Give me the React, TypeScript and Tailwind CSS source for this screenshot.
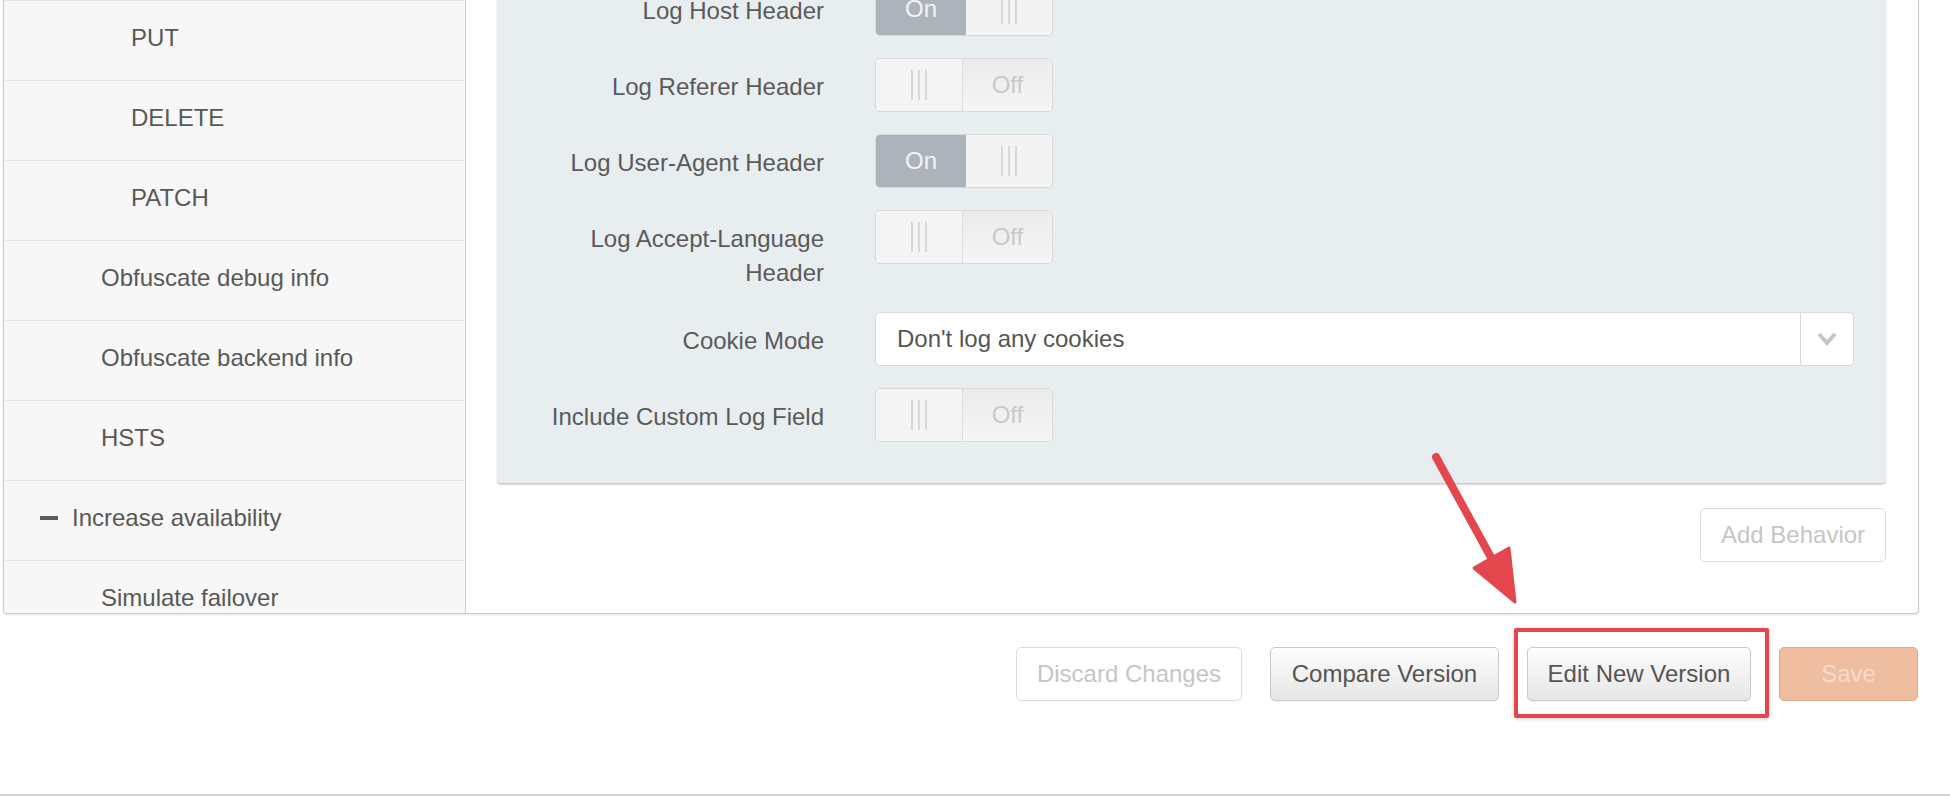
import React from "react";

const FONT = { fontFamily: '"Liberation Sans", Arial, Helvetica, sans-serif' };

function Grip() {
  return (
    <div className="flex gap-[5px]">
      <div className="w-[2px] h-[30px] bg-[#d8d8d8]" />
      <div className="w-[2px] h-[30px] bg-[#d8d8d8]" />
      <div className="w-[2px] h-[30px] bg-[#d8d8d8]" />
    </div>
  );
}

function Toggle({ on }: { on: boolean }) {
  return (
    <div className="flex w-[178px] h-[54px] rounded-[5px] border border-[#d9d9d9] overflow-hidden">
      {on ? (
        <>
          <div className="w-[90px] bg-[#adb3bb] text-[#f4f4f4] flex items-center justify-center">On</div>
          <div className="flex-1 bg-[#f3f3f3] flex items-center justify-center">
            <Grip />
          </div>
        </>
      ) : (
        <>
          <div className="w-[87px] bg-[#f4f4f4] flex items-center justify-center border-r border-[#dcdcdc]">
            <Grip />
          </div>
          <div className="flex-1 bg-linear-to-b from-[#ebebeb] to-[#f5f5f5] text-[#c9c9c9] flex items-center justify-center">
            Off
          </div>
        </>
      )}
    </div>
  );
}

function Row({ label, children }: { label: React.ReactNode; children: React.ReactNode }) {
  return (
    <div className="flex items-start">
      <div className="w-[300px] text-right pt-[12px] leading-[34px] text-[#5a5a5a]">{label}</div>
      <div className="ml-[51px] flex-1">{children}</div>
    </div>
  );
}

function SideItem({ children, indent }: { children: React.ReactNode; indent: string }) {
  return (
    <div className={`h-[80px] shrink-0 border-t border-[#e8e8e8] flex items-center pb-[5px] ${indent} text-[#585858]`}>
      {children}
    </div>
  );
}

export default function App() {
  return (
    <div
      className="relative w-[1950px] h-[796px] bg-white border-b-[2px] border-[#d2d2d2] overflow-hidden text-[24px]"
      style={FONT}
    >
      <div className="ml-[3px] w-[1916px] h-[614px] flex border-x border-b border-[#cccccc] rounded-b-[4px] overflow-hidden shadow-[0_1px_2px_rgba(0,0,0,0.12)]">
        {/* Sidebar */}
        <div className="w-[462px] shrink-0 bg-[#f7f7f7] border-r border-[#cfcfcf] flex flex-col">
          <SideItem indent="pl-[127px]">PUT</SideItem>
          <SideItem indent="pl-[127px]">DELETE</SideItem>
          <SideItem indent="pl-[127px]">PATCH</SideItem>
          <SideItem indent="pl-[97px]">Obfuscate debug info</SideItem>
          <SideItem indent="pl-[97px]">Obfuscate backend info</SideItem>
          <SideItem indent="pl-[97px]">HSTS</SideItem>
          <SideItem indent="pl-[36px]">
            <span className="w-[18px] h-[4px] bg-[#5a5a5a] mr-[14px]" />
            Increase availability
          </SideItem>
          <SideItem indent="pl-[97px]">Simulate failover</SideItem>
        </div>

        {/* Main */}
        <div className="flex-1 flex flex-col pl-[31px] pr-[32px]">
          <div className="-mt-[40px] bg-[#e8edf0] rounded-b-[4px] border-b border-[#c6cbcf] shadow-[0_1px_2px_rgba(0,0,0,0.15)] pt-[22px] pb-[41px] pl-[27px] pr-[32px] flex flex-col gap-[22px]">
            <Row label="Log Host Header">
              <Toggle on />
            </Row>
            <Row label="Log Referer Header">
              <Toggle on={false} />
            </Row>
            <Row label="Log User-Agent Header">
              <Toggle on />
            </Row>
            <Row
              label={
                <>
                  Log Accept-Language
                  <br />
                  Header
                </>
              }
            >
              <Toggle on={false} />
            </Row>
            <Row label="Cookie Mode">
              <div className="h-[54px] flex bg-white border border-[#d9d9d9] rounded-[5px] overflow-hidden">
                <div className="flex-1 flex items-center pl-[21px] text-[#555555]">Don't log any cookies</div>
                <div className="w-[53px] border-l border-[#d9d9d9] flex items-center justify-center">
                  <svg width="20" height="14" viewBox="0 0 20 14">
                    <polyline
                      points="2,2 10,11 18,2"
                      fill="none"
                      stroke="#c6c6c6"
                      strokeWidth="4"
                      strokeLinejoin="miter"
                    />
                  </svg>
                </div>
              </div>
            </Row>
            <Row label="Include Custom Log Field">
              <Toggle on={false} />
            </Row>
          </div>

          <div className="mt-[24px] flex justify-end">
            <button className="w-[186px] h-[54px] bg-white border border-[#dcdcdc] rounded-[5px] text-[#c6c6c6]">
              Add Behavior
            </button>
          </div>
        </div>
      </div>

      {/* Bottom buttons */}
      <div className="ml-[3px] w-[1916px] mt-[33px] flex justify-end gap-[28px] pr-[1px]">
        <button className="w-[226px] h-[54px] bg-white border border-[#dcdcdc] rounded-[5px] text-[#c6c6c6]">
          Discard Changes
        </button>
        <button className="w-[229px] h-[54px] bg-linear-to-b from-[#fdfdfd] to-[#e6e6e6] border border-[#c9c9c9] rounded-[5px] text-[#555555] shadow-[0_1px_1px_rgba(0,0,0,0.06)]">
          Compare Version
        </button>
        <div className="relative">
          <button className="w-[224px] h-[54px] bg-linear-to-b from-[#fdfdfd] to-[#e6e6e6] border border-[#c9c9c9] rounded-[5px] text-[#555555] shadow-[0_1px_1px_rgba(0,0,0,0.06)]">
            Edit New Version
          </button>
          <div className="absolute -left-[13px] -right-[18px] -top-[19px] -bottom-[17px] border-[4px] border-[#e3474d] rounded-[2px] shadow-[0_1px_4px_rgba(0,0,0,0.2)] pointer-events-none" />
        </div>
        <button className="w-[139px] h-[54px] bg-[#efbd9f] border border-[#dbab8c] rounded-[5px] text-[#f7dccb]">
          Save
        </button>
      </div>

      {/* Annotation arrow */}
      <svg
        className="absolute left-0 top-0 pointer-events-none"
        width="1950"
        height="796"
        viewBox="0 0 1950 796"
      >
        <line x1="1436" y1="457" x2="1493" y2="561" stroke="#e3474d" strokeWidth="8" strokeLinecap="round" />
        <polygon
          points="1515,602 1474,568 1509,548"
          fill="#e3474d"
          stroke="#e3474d"
          strokeWidth="3"
          strokeLinejoin="round"
        />
      </svg>
    </div>
  );
}
